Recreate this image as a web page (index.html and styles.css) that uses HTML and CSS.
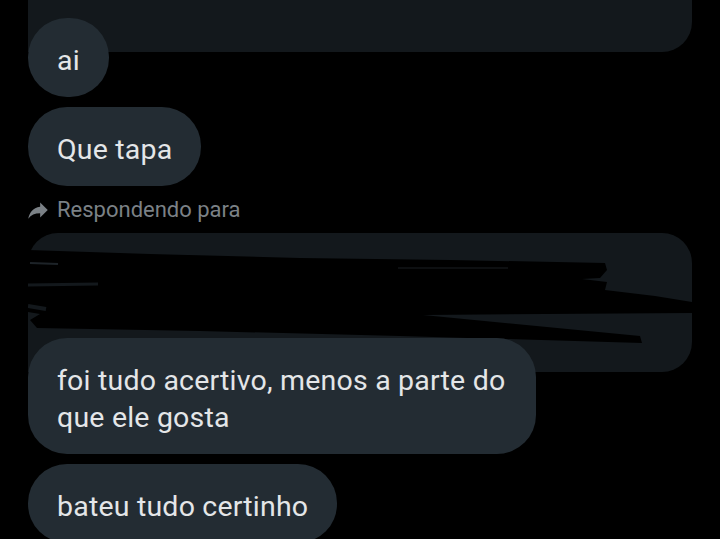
FILE: index.html
```html
<!DOCTYPE html>
<html lang="pt">
<head>
    <meta charset="UTF-8">
    <meta name="viewport" content="width=device-width, initial-scale=1.0">
    <title>Mensagens</title>
    <link rel="stylesheet" href="styles.css">
</head>
<body>

    <div class="thread">
        <div class="quote quote-top"></div>
        <div class="bubble bubble-reply">ai</div>
        <div class="bubble">Que tapa</div>

        <div class="reply-label">
            <svg class="reply-icon" viewBox="0 0 24 24" width="26" height="26">
                <path d="M14 9V5l7 7-7 7v-4.1c-5 0-8.5 1.6-11 5.1 1-5 4-10 11-11z"/>
            </svg>
            Respondendo para
        </div>

        <div class="quote">
            <!-- rabisco por cima da mensagem citada -->
            <svg class="scribble" viewBox="0 0 664 139" preserveAspectRatio="none">
                <path d="M0 17 L122 21 L272 25 L422 27 L577 30 L579 37 L572 45 L554 46 L579 49 L577 57 L627 63 L664 69 L664 80 L395 82 L612 103 L614 110 L372 103 L172 98 L9 95 L2 87 L12 81 L0 79 Z" fill="#000"/>
                <path d="M0 52 L70 51" stroke="#13181c" stroke-width="3" fill="none"/>
                <path d="M0 73 L18 76" stroke="#13181c" stroke-width="4" fill="none"/>
                <path d="M2 30 L30 31" stroke="#1d2328" stroke-width="2" fill="none"/>
                <path d="M370 35 L480 35" stroke="#1a1f23" stroke-width="1" fill="none"/>
            </svg>
        </div>
        <div class="bubble bubble-reply">foi tudo acertivo, menos a parte do que ele gosta</div>
        <div class="bubble">bateu tudo certinho</div>
    </div>

</body>
</html>
```

FILE: styles.css
```css
body {
    font-family: Roboto, "Noto Sans", sans-serif;
    background-color: #000;
    color: #e4e6e8;
    margin: 0;
    overflow: hidden;
}

.thread {
    display: flex;
    flex-direction: column;
    align-items: flex-start;
    gap: 10px;
    padding: 0 28px;
}

.quote {
    position: relative;
    align-self: stretch;
    height: 139px;
    background-color: #13181c;
    border-radius: 30px 30px 30px 0;
}

.quote-top {
    height: 140px;
    margin-top: -88px;
}

.scribble {
    position: absolute;
    left: 0;
    top: 0;
    width: 100%;
    height: 100%;
}

.bubble {
    position: relative;
    z-index: 1;
    box-sizing: border-box;
    max-width: 508px;
    padding: 24px 29px 18px 29px;
    font-size: 28.5px;
    line-height: 37px;
    letter-spacing: 0.2px;
    background-color: #232c33;
    border-radius: 39px;
}

.bubble-reply {
    margin-top: -44px;
}

.reply-label {
    display: flex;
    align-items: center;
    gap: 6px;
    margin-left: -3px;
    font-size: 22px;
    line-height: 27px;
    color: #7b8186;
}

.reply-icon {
    fill: #7b8186;
}
```
